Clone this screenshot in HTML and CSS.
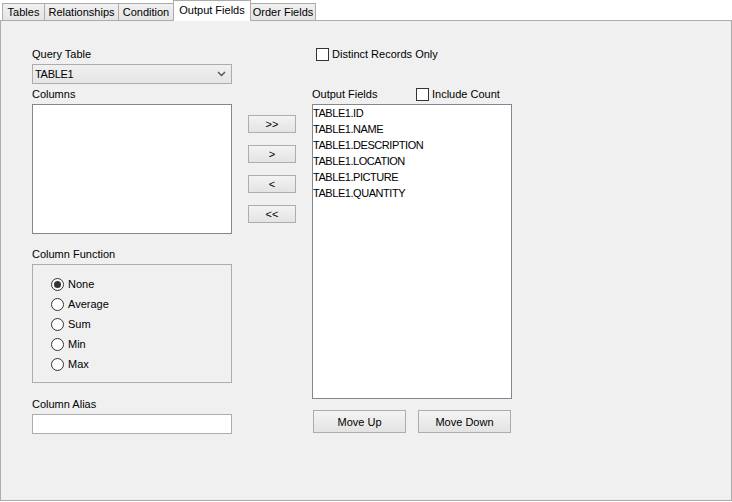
FILE: index.html
```html
<!DOCTYPE html>
<html lang="en">
<head>
<meta charset="UTF-8">
<title>Output Fields</title>
<link rel="stylesheet" href="styles.css">
</head>
<body>
<div class="tabs">
  <div class="tab" style="width:43px">Tables</div>
  <div class="tab" style="width:75px">Relationships</div>
  <div class="tab" style="width:56px">Condition</div>
  <div class="tab active" style="width:78px">Output Fields</div>
  <div class="tab" style="width:66px">Order Fields</div>
</div>

<div class="panel">
  <!-- left column -->
  <div class="col-left">
    <div class="label">Query Table</div>
    <div class="select">
      <span>TABLE1</span>
      <svg width="9" height="6" viewBox="0 0 9 6"><polyline points="1,1 4.5,4.5 8,1" fill="none" stroke="#555" stroke-width="1.4"/></svg>
    </div>
    <div class="label gap-s">Columns</div>
    <div class="listbox cols"></div>

    <div class="label gap-l">Column Function</div>
    <div class="group">
      <div class="radio-row"><span class="radio on"></span>None</div>
      <div class="radio-row"><span class="radio"></span>Average</div>
      <div class="radio-row"><span class="radio"></span>Sum</div>
      <div class="radio-row"><span class="radio"></span>Min</div>
      <div class="radio-row"><span class="radio"></span>Max</div>
    </div>

    <div class="label gap-xl">Column Alias</div>
    <div class="textbox"></div>
  </div>

  <!-- move buttons -->
  <div class="col-mid">
    <div class="btn small">&gt;&gt;</div>
    <div class="btn small">&gt;</div>
    <div class="btn small">&lt;</div>
    <div class="btn small">&lt;&lt;</div>
  </div>

  <!-- right column -->
  <div class="col-right">
    <div class="check-row distinct"><span class="checkbox"></span>Distinct Records Only</div>
    <div class="out-head">
      <div class="out-label">Output Fields</div>
      <div class="check-row"><span class="checkbox"></span>Include Count</div>
    </div>
    <div class="listbox outs">
      <div class="item">TABLE1.ID</div>
      <div class="item">TABLE1.NAME</div>
      <div class="item">TABLE1.DESCRIPTION</div>
      <div class="item">TABLE1.LOCATION</div>
      <div class="item">TABLE1.PICTURE</div>
      <div class="item">TABLE1.QUANTITY</div>
    </div>
    <div class="move-btns">
      <div class="btn big">Move Up</div>
      <div class="btn big">Move Down</div>
    </div>
  </div>
</div>
</body>
</html>
```

FILE: styles.css
```css
body {
  margin: 0;
  background: #ffffff;
  font-family: "Liberation Sans", Arial, sans-serif;
  font-size: 11px;
  color: #000000;
}
.tabs {
  display: flex;
  align-items: flex-end;
  height: 20px;
  padding-left: 2px;
}
.tab {
  box-sizing: border-box;
  height: 17px;
  line-height: 16px;
  margin-right: -1px;
  border: 1px solid #acacac;
  border-bottom: none;
  background: linear-gradient(#f0f0f0, #e5e5e5);
  text-align: center;
  color: #000;
}
.tab.active {
  position: relative;
  z-index: 1;
  height: 21px;
  line-height: 18px;
  margin-bottom: -1px;
  background: #ffffff;
}
.panel {
  box-sizing: border-box;
  width: 732px;
  height: 481px;
  border: 1px solid #acacac;
  background: #f0f0f0;
  padding: 26px 0 0 31px;
  display: grid;
  grid-template-columns: 200px 48px 200px;
  column-gap: 16px;
  align-items: start;
}
.col-left, .col-right, .col-mid {
  display: flex;
  flex-direction: column;
}
.label {
  height: 14px;
  line-height: 14px;
  margin-bottom: 3px;
}
.gap-s { margin-top: 3px; }
.gap-l { margin-top: 13px; }
.gap-xl { margin-top: 14px; }
.select {
  box-sizing: border-box;
  height: 20px;
  border: 1px solid #acacac;
  background: linear-gradient(#f0f0f0, #e5e5e5);
  display: flex;
  align-items: center;
  justify-content: space-between;
  padding: 0 5px 0 2px;
  letter-spacing: -0.3px;
}
.listbox {
  box-sizing: border-box;
  border: 1px solid #828790;
  background: #ffffff;
}
.cols { height: 130px; }
.outs { height: 295px; }
.item {
  height: 16px;
  line-height: 16px;
  letter-spacing: -0.45px;
}
.group {
  box-sizing: border-box;
  height: 119px;
  border: 1px solid #adadad;
  padding: 9px 0 0 18px;
}
.radio-row {
  display: flex;
  align-items: center;
  height: 20px;
}
.radio {
  box-sizing: border-box;
  width: 13px;
  height: 13px;
  border: 1px solid #333333;
  border-radius: 50%;
  background: #ffffff;
  margin-right: 4px;
  display: flex;
  align-items: center;
  justify-content: center;
}
.radio.on::after {
  content: "";
  width: 7px;
  height: 7px;
  border-radius: 50%;
  background: #333333;
}
.textbox {
  box-sizing: border-box;
  height: 20px;
  border: 1px solid #abadb3;
  background: #ffffff;
}
.col-mid {
  padding-top: 68px;
  gap: 12px;
}
.btn {
  box-sizing: border-box;
  border: 1px solid #adadad;
  background: linear-gradient(#f3f3f3, #e3e3e3);
  display: flex;
  align-items: center;
  justify-content: center;
}
.btn.small { height: 18px; }
.btn.big { width: 93px; height: 23px; }
.check-row {
  display: flex;
  align-items: center;
  height: 14px;
}
.distinct { padding-left: 4px; }
.checkbox {
  box-sizing: border-box;
  width: 13px;
  height: 13px;
  border: 1px solid #333333;
  background: #ffffff;
  margin-right: 3px;
}
.out-head {
  display: flex;
  align-items: center;
  margin-top: 26px;
  margin-bottom: 3px;
  height: 14px;
}
.out-label { width: 104px; }
.move-btns {
  display: flex;
  gap: 12px;
  margin-top: 11px;
  padding-left: 1px;
}
```
